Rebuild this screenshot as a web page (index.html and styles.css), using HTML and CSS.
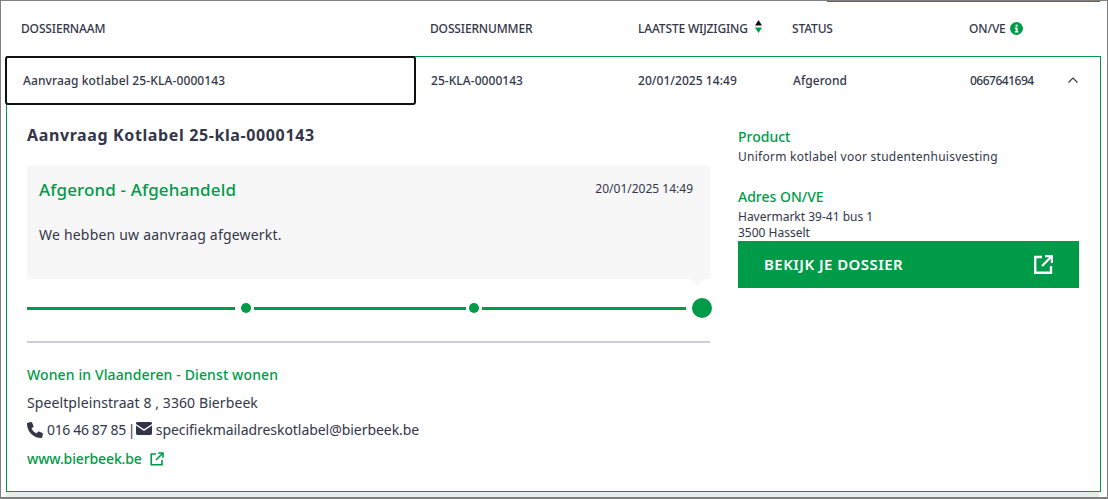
FILE: index.html
```html
<!DOCTYPE html>
<html lang="nl">
<head>
    <meta charset="UTF-8">
    <meta name="viewport" content="width=device-width, initial-scale=1.0">
    <title>Dossiers</title>
    <link rel="stylesheet" href="styles.css">
</head>
<body>

    <div class="frame">
        <div class="top-line"></div>

        <div class="cols head">
            <div class="head-name">DOSSIERNAAM</div>
            <div>DOSSIERNUMMER</div>
            <div class="sortable">LAATSTE WIJZIGING
                <svg class="sort" width="7" height="13" viewBox="0 0 7 13">
                    <path d="M3.5 0L7 5.5H0z" fill="#111"/>
                    <path d="M0 7.5H7L3.5 13z" fill="#009b48"/>
                </svg>
            </div>
            <div>STATUS</div>
            <div class="head-onve">ON/VE
                <svg width="13" height="13" viewBox="0 0 13 13">
                    <circle cx="6.5" cy="6.5" r="6.5" fill="#009b48"/>
                    <rect x="5.6" y="2.6" width="2" height="2" fill="#fff"/>
                    <path d="M4.8 5.6H7.6V9.2H8.5V10.4H4.8V9.2H5.7V6.8H4.8z" fill="#fff"/>
                </svg>
            </div>
        </div>

        <div class="item">
            <div class="cols row">
                <div class="row-name">Aanvraag kotlabel 25-KLA-0000143</div>
                <div>25-KLA-0000143</div>
                <div>20/01/2025 14:49</div>
                <div>Afgerond</div>
                <div class="row-onve"><span class="onve-nr">0667641694</span>
                    <svg class="chevron" width="10" height="6" viewBox="0 0 10 6">
                        <path d="M.5 5.5L5 1l4.5 4.5" fill="none" stroke="#333649" stroke-width="1.1"/>
                    </svg>
                </div>
            </div>

            <div class="panel">
                <div class="panel-left">
                    <h2>Aanvraag Kotlabel 25-kla-0000143</h2>

                    <div class="status-box">
                        <div class="status-top">
                            <h3>Afgerond - Afgehandeld</h3>
                            <span class="status-date">20/01/2025 14:49</span>
                        </div>
                        <p>We hebben uw aanvraag afgewerkt.</p>
                    </div>

                    <div class="timeline">
                        <span class="line line-a"></span>
                        <span class="dot dot-first"></span>
                        <span class="line line-b"></span>
                        <span class="dot"></span>
                        <span class="line line-c"></span>
                        <span class="dot big"></span>
                    </div>

                    <div class="contact">
                        <div class="contact-name">Wonen in Vlaanderen - Dienst wonen</div>
                        <div class="contact-addr">Speeltpleinstraat 8 , 3360 Bierbeek</div>
                        <div class="contact-line">
                            <svg width="16" height="16" viewBox="0 0 512 512"><path fill="#333649" d="M511.2 387l-23.25 100.8c-3.266 14.25-15.79 24.22-30.46 24.22C205.2 512 0 306.8 0 54.5c0-14.66 9.969-27.2 24.22-30.45l100.8-23.25C139.7-2.602 154.7 5.018 160.8 18.92l46.52 108.5c5.438 12.78 1.77 27.67-8.98 36.45L144.5 207.1c33.98 69.22 90.26 125.5 159.5 159.5l44.08-53.8c8.688-10.78 23.69-14.51 36.47-8.975l108.5 46.51C506.1 357.2 514.6 372.4 511.2 387z"/></svg>
                            <span class="phone">016 46 87 85</span>
                            <span class="sep">|</span>
                            <svg width="16" height="13" viewBox="0 0 16 13"><path fill="#333649" d="M1.4 0H14.6C15.4 0 16 .6 16 1.4V1.9L8 7.2 0 1.9V1.4C0 .6.6 0 1.4 0zM0 3.6L8 8.9 16 3.6V11.6C16 12.4 15.4 13 14.6 13H1.4C.6 13 0 12.4 0 11.6z"/></svg>
                            <span class="mail">specifiekmailadreskotlabel@bierbeek.be</span>
                        </div>
                        <div class="contact-web">www.bierbeek.be
                            <svg width="14" height="14" viewBox="0 0 14 14">
                                <path d="M6 2H1.2V12.8H12V8M8.2 1H13V5.8M13 1L6 8" fill="none" stroke="#009b48" stroke-width="1.6"/>
                            </svg>
                        </div>
                    </div>
                </div>

                <div class="panel-right">
                    <h4>Product</h4>
                    <div class="info info-product">Uniform kotlabel voor studentenhuisvesting</div>
                    <h4 class="adres">Adres ON/VE</h4>
                    <div class="info info-adres">Havermarkt 39-41 bus 1<br>3500 Hasselt</div>
                    <div class="btn">BEKIJK JE DOSSIER
                        <svg width="19" height="19" viewBox="0 0 19 19">
                            <path d="M8 2H1.2V17.8H17V11M11 1H18V8M18 1L8 11" fill="none" stroke="#fff" stroke-width="2.4"/>
                        </svg>
                    </div>
                </div>
            </div>
        </div>
        <div class="strip"></div>
    </div>

</body>
</html>
```

FILE: styles.css
```css
* {
    margin: 0;
    padding: 0;
    box-sizing: border-box;
}

body {
    font-family: "Noto Sans", "Lato", sans-serif;
    color: #333649;
    background: #fff;
}

/* Venster */
.frame {
    width: 1108px;
    height: 499px;
    border: 1px solid #808080;
    border-bottom-width: 2px;
    padding: 0 6px 0 5px;
    overflow: hidden;
}

.top-line {
    width: 273px;
    height: 1px;
    margin-left: 821px;
    background: #009b48;
}

/* Kolommen */
.cols {
    display: grid;
    grid-template-columns: 424px 208px 154px 177px 1fr;
    align-items: center;
}

.head {
    height: 54px;
    padding-bottom: 2px;
    font-size: 12px;
    font-weight: 500;
    letter-spacing: -0.15px;
}

.head-name {
    padding-left: 15px;
}

.sortable {
    display: flex;
    align-items: center;
    gap: 7px;
}

.sort {
    margin-top: -3px;
}

.head-onve {
    display: flex;
    align-items: center;
    gap: 4px;
}

/* Rij */
.item {
    border: 1px solid #009b48;
    height: 436px;
}

.row {
    height: 48px;
    margin-left: -1px;
    font-size: 12px;
    font-weight: 500;
    letter-spacing: 0.05px;
}

.row > div {
    padding-bottom: 2px;
}

.row > div:nth-child(2),
.row > div:nth-child(4) {
    padding-left: 1px;
}

.row > .row-name {
    align-self: start;
    width: 411px;
    height: 49px;
    line-height: 45px;
    margin: -1px 0 0 -1px;
    padding: 0 0 0 16px;
    border: 2px solid #111;
    border-radius: 3px;
    background: #fff;
    letter-spacing: 0.12px;
}

.row-onve {
    display: flex;
    align-items: center;
    padding-left: 1px;
    gap: 34px;
}

.onve-nr {
    letter-spacing: -0.5px;
}

/* Paneel */
.panel {
    display: flex;
    padding: 0 20px;
    gap: 28px;
}

.panel-left {
    width: 683px;
}

.panel-right {
    width: 341px;
    padding-top: 23px;
}

h2 {
    font-size: 16px;
    font-weight: 700;
    letter-spacing: 0.62px;
    line-height: 20px;
    margin-top: 20px;
    margin-bottom: 21px;
}

.status-box {
    position: relative;
    height: 113px;
    padding: 13px 17px 0 12px;
    background: #f7f7f7;
}

.status-box::after {
    content: "";
    position: absolute;
    right: 6px;
    bottom: -7px;
    border-left: 7px solid transparent;
    border-right: 7px solid transparent;
    border-top: 7px solid #f7f7f7;
}

.status-top {
    display: flex;
    justify-content: space-between;
    align-items: flex-start;
}

h3 {
    font-size: 17px;
    font-weight: 500;
    line-height: 22px;
    letter-spacing: 0.13px;
    color: #009b48;
}

.status-date {
    font-size: 12px;
    line-height: 20px;
}

.status-box p {
    font-size: 14px;
    line-height: 20px;
    letter-spacing: 0.2px;
    margin-top: 24px;
}

/* Tijdlijn */
.timeline {
    display: flex;
    align-items: center;
    gap: 3px;
    height: 20px;
    margin-top: 19px;
}

.line {
    flex: none;
    height: 3px;
    background: #009b48;
}

.line-a {
    width: 208px;
}

.line-b {
    width: 212px;
}

.line-c {
    width: 204px;
}

.dot {
    flex: none;
    width: 10px;
    height: 10px;
    border-radius: 50%;
    background: #009b48;
}

.dot-first {
    margin-left: 3px;
}

.dot.big {
    width: 20px;
    height: 20px;
    margin-left: 3px;
}

/* Contact */
.contact {
    margin-top: 23px;
    padding-top: 22px;
    border-top: 2px solid #cdd0dc;
    font-size: 14px;
}

.contact > div {
    height: 28px;
    line-height: 20px;
}

.contact-name,
.contact-web {
    color: #009b48;
    font-weight: 500;
}

.contact-name {
    letter-spacing: 0.12px;
}

.contact-addr {
    letter-spacing: 0.09px;
}

.contact-web {
    letter-spacing: -0.13px;
}

.contact > .contact-line {
    display: flex;
    align-items: flex-start;
    gap: 4px;
    margin-top: -1px;
    height: 29px;
}

.contact-line svg {
    margin-top: 2px;
}

.phone {
    letter-spacing: -0.35px;
}

.sep {
    width: 4px;
    margin-left: -2px;
}

.mail {
    letter-spacing: -0.05px;
}

.contact-web svg {
    vertical-align: -2px;
    margin-left: 5px;
}

/* Rechterkolom */
h4 {
    font-size: 14px;
    font-weight: 500;
    line-height: 18px;
    color: #009b48;
}

.adres {
    margin-top: 23px;
}

.info {
    font-size: 12px;
    line-height: 16px;
}

.info-product {
    margin-top: 3px;
    letter-spacing: 0.26px;
}

.info-adres {
    margin-top: 3px;
}

.btn {
    display: flex;
    justify-content: space-between;
    align-items: center;
    height: 47px;
    padding: 0 26px 1px;
    background: #009b48;
    color: #fff;
    font-size: 15px;
    font-weight: 600;
    letter-spacing: 0.45px;
}

.strip {
    height: 5px;
    width: 1093px;
    background: #e3efe7;
}
```
